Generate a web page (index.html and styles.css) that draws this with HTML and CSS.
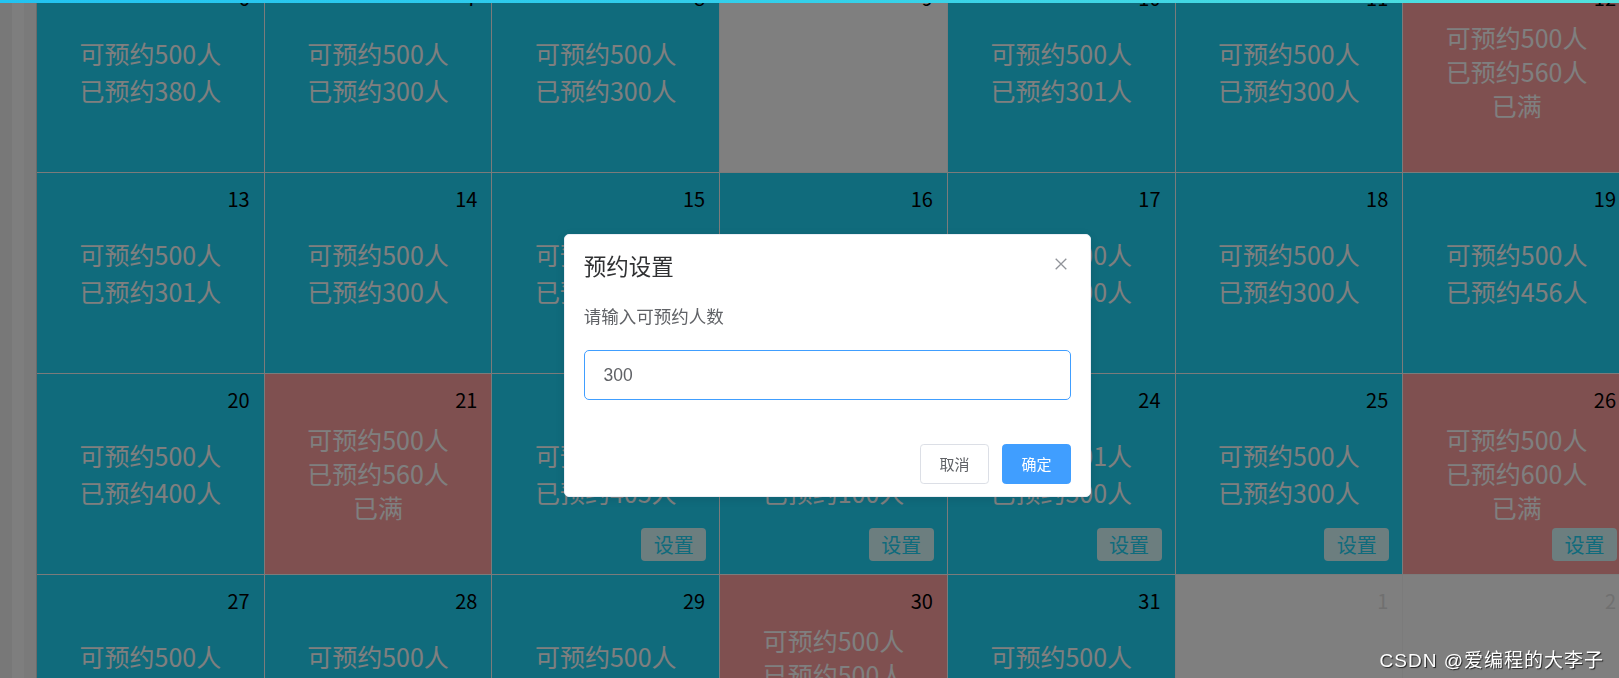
FILE: index.html
```html
<!DOCTYPE html>
<html lang="zh-CN">
<head>
<meta charset="utf-8">
<title>预约设置</title>
<link rel="stylesheet" href="styles.css">
</head>
<body>
<div class="page">
  <div class="gutter">
    <span class="strip strip-a"></span>
    <span class="strip strip-b"></span>
    <span class="strip strip-c"></span>
  </div>
  <div class="calendar">
    <div class="cell open"><div class="day">6</div><div class="info"><p>可预约500人</p><p>已预约380人</p></div></div>
    <div class="cell open"><div class="day">7</div><div class="info"><p>可预约500人</p><p>已预约300人</p></div></div>
    <div class="cell open"><div class="day">8</div><div class="info"><p>可预约500人</p><p>已预约300人</p></div></div>
    <div class="cell off"><div class="day">9</div></div>
    <div class="cell open"><div class="day">10</div><div class="info"><p>可预约500人</p><p>已预约301人</p></div></div>
    <div class="cell open"><div class="day">11</div><div class="info"><p>可预约500人</p><p>已预约300人</p></div></div>
    <div class="cell full"><div class="day">12</div><div class="info"><p>可预约500人</p><p>已预约560人</p><p>已满</p></div></div>

    <div class="cell open"><div class="day">13</div><div class="info"><p>可预约500人</p><p>已预约301人</p></div></div>
    <div class="cell open"><div class="day">14</div><div class="info"><p>可预约500人</p><p>已预约300人</p></div></div>
    <div class="cell open"><div class="day">15</div><div class="info"><p>可预约500人</p><p>已预约300人</p></div></div>
    <div class="cell open"><div class="day">16</div><div class="info"><p>可预约500人</p><p>已预约300人</p></div></div>
    <div class="cell open"><div class="day">17</div><div class="info"><p>可预约500人</p><p>已预约300人</p></div></div>
    <div class="cell open"><div class="day">18</div><div class="info"><p>可预约500人</p><p>已预约300人</p></div></div>
    <div class="cell open"><div class="day">19</div><div class="info"><p>可预约500人</p><p>已预约456人</p></div></div>

    <div class="cell open"><div class="day">20</div><div class="info"><p>可预约500人</p><p>已预约400人</p></div></div>
    <div class="cell full"><div class="day">21</div><div class="info"><p>可预约500人</p><p>已预约560人</p><p>已满</p></div></div>
    <div class="cell open"><div class="day">22</div><div class="info"><p>可预约500人</p><p>已预约405人</p></div><button class="set-btn">设置</button></div>
    <div class="cell open"><div class="day">23</div><div class="info"><p>可预约500人</p><p>已预约100人</p></div><button class="set-btn">设置</button></div>
    <div class="cell open"><div class="day">24</div><div class="info"><p>可预约501人</p><p>已预约500人</p></div><button class="set-btn">设置</button></div>
    <div class="cell open"><div class="day">25</div><div class="info"><p>可预约500人</p><p>已预约300人</p></div><button class="set-btn">设置</button></div>
    <div class="cell full"><div class="day">26</div><div class="info"><p>可预约500人</p><p>已预约600人</p><p>已满</p></div><button class="set-btn">设置</button></div>

    <div class="cell open"><div class="day">27</div><div class="info"><p>可预约500人</p><p>已预约300人</p></div><button class="set-btn">设置</button></div>
    <div class="cell open"><div class="day">28</div><div class="info"><p>可预约500人</p><p>已预约300人</p></div><button class="set-btn">设置</button></div>
    <div class="cell open"><div class="day">29</div><div class="info"><p>可预约500人</p><p>已预约300人</p></div><button class="set-btn">设置</button></div>
    <div class="cell full"><div class="day">30</div><div class="info"><p>可预约500人</p><p>已预约500人</p><p>已满</p></div><button class="set-btn">设置</button></div>
    <div class="cell open"><div class="day">31</div><div class="info"><p>可预约500人</p><p>已预约300人</p></div><button class="set-btn">设置</button></div>
    <div class="cell next"><div class="day">1</div></div>
    <div class="cell next"><div class="day">2</div></div>
  </div>
</div>

<div class="mask"></div>

<div class="dialog">
  <div class="dialog-header">
    <h2 class="dialog-title">预约设置</h2>
    <button class="dialog-close" aria-label="关闭">
      <svg width="12" height="12" viewBox="0 0 12 12"><path d="M0.7 0.7 L11.3 11.3 M11.3 0.7 L0.7 11.3" stroke="#909399" stroke-width="1.3" fill="none"/></svg>
    </button>
  </div>
  <div class="dialog-content">
    <p class="dialog-message">请输入可预约人数</p>
    <div class="dialog-input">
      <input class="prompt-input" type="text" value="300">
      <div class="dialog-error"></div>
    </div>
  </div>
  <div class="dialog-btns">
    <button class="btn btn-default">取消</button>
    <button class="btn btn-primary">确定</button>
  </div>
</div>

<div class="topbar"></div>
<div class="watermark">CSDN @爱编程的大李子</div>
</body>
</html>
```

FILE: styles.css
```css
* {
  box-sizing: border-box;
}

html, body {
  margin: 0;
  padding: 0;
  height: 100%;
  overflow: hidden;
  background: #ffffff;
}

body {
  font-family: "Noto Sans CJK SC", "Noto Sans", sans-serif;
}

.page {
  display: flex;
  align-items: flex-start;
}

.gutter {
  display: flex;
  flex-shrink: 0;
  height: 678px;
}

.strip {
  width: 12px;
  height: 100%;
}

.strip-a { background: #f0f0f0; }
.strip-b { background: #fdfdfd; }
.strip-c { background: #f4f4f4; }

.calendar {
  flex-shrink: 0;
  width: 1594px;
  margin-top: -28px;
  display: grid;
  grid-template-columns: repeat(7, 1fr);
  grid-auto-rows: 200px;
  gap: 1px;
  background: #f6f6f6;
  border-left: 1px solid #d4d4d4;
}

.cell {
  display: grid;
  grid-template-rows: 28px 1fr 33px;
  padding: 12px 13px 13px 13px;
  min-width: 0;
}

.cell.open { background: #20d6f8; }
.cell.full { background: #ffa0a0; }
.cell.off { background: #ffffff; }
.cell.next { background: #ffffff; }

.day {
  grid-row: 1;
  text-align: right;
  font-size: 20px;
  line-height: 28px;
  color: #000000;
  padding-right: 1px;
}

.cell.next .day {
  color: #e0e0e0;
}

.info {
  grid-row: 2;
  align-self: center;
  padding-top: 6px;
  text-align: center;
  color: #ffffff;
  font-size: 25px;
  line-height: 37px;
}

.cell.full .info {
  padding-top: 4px;
  line-height: 34px;
}

.info p {
  margin: 0;
}

.set-btn {
  grid-row: 3;
  justify-self: end;
  width: 65px;
  height: 33px;
  padding: 0;
  border: none;
  border-radius: 4px;
  background: #d8fcfe;
  color: #20d6f8;
  font-family: "Noto Sans CJK SC", sans-serif;
  font-size: 20px;
  line-height: 33px;
}

.mask {
  position: fixed;
  inset: 0;
  background: rgba(0, 0, 0, 0.5);
}

.dialog {
  position: fixed;
  left: 564px;
  top: 234px;
  width: 527px;
  background: #ffffff;
  border: 1px solid #ebeef5;
  border-radius: 5px;
  padding-bottom: 12.5px;
  box-shadow: 0 2px 12px rgba(0, 0, 0, 0.1);
  font-family: "Liberation Sans", "Noto Sans CJK SC", sans-serif;
}

.dialog-header {
  position: relative;
  padding: 18.75px 18.75px 12.5px;
}

.dialog-title {
  margin: 0;
  font-size: 22.5px;
  font-weight: normal;
  line-height: 1;
  color: #303133;
  font-family: "Noto Sans CJK SC", sans-serif;
}

.dialog-close {
  position: absolute;
  top: 19px;
  right: 19px;
  width: 20px;
  height: 20px;
  padding: 0;
  border: none;
  background: transparent;
  display: flex;
  align-items: center;
  justify-content: center;
}

.dialog-content {
  padding: 12.5px 18.75px;
  font-size: 17.5px;
  color: #606266;
}

.dialog-message {
  margin: 0;
  line-height: 30px;
  font-family: "Noto Sans CJK SC", sans-serif;
}

.dialog-input {
  padding-top: 18.75px;
}

.prompt-input {
  display: block;
  width: 100%;
  height: 50px;
  padding: 0 18.75px;
  border: 1px solid #409eff;
  border-radius: 5px;
  outline: none;
  font-family: "Liberation Sans", sans-serif;
  font-size: 17.5px;
  color: #606266;
  background: #ffffff;
}

.dialog-error {
  min-height: 22.5px;
  margin-top: 2.5px;
}

.dialog-btns {
  display: flex;
  justify-content: flex-end;
  gap: 12.5px;
  padding: 6.25px 18.75px 0;
}

.btn {
  height: 40px;
  padding: 0 18.75px;
  border-radius: 3.75px;
  font-family: "Noto Sans CJK SC", sans-serif;
  font-size: 15px;
  line-height: 1;
}

.btn-default {
  background: #ffffff;
  border: 1px solid #dcdfe6;
  color: #606266;
}

.btn-primary {
  background: #409eff;
  border: 1px solid #409eff;
  color: #ffffff;
}

.topbar {
  position: fixed;
  top: 0;
  left: 0;
  right: 0;
  height: 3px;
  background: linear-gradient(90deg, #22c3f1, #34d0ea 50%, #52e1dd);
}

.watermark {
  position: fixed;
  right: 15px;
  bottom: 6px;
  color: #ffffff;
  font-family: "Liberation Sans", "Noto Sans CJK SC", sans-serif;
  font-size: 19px;
  letter-spacing: 1px;
  text-shadow: 1px 1px 1px rgba(0, 0, 0, 0.75);
}
```
